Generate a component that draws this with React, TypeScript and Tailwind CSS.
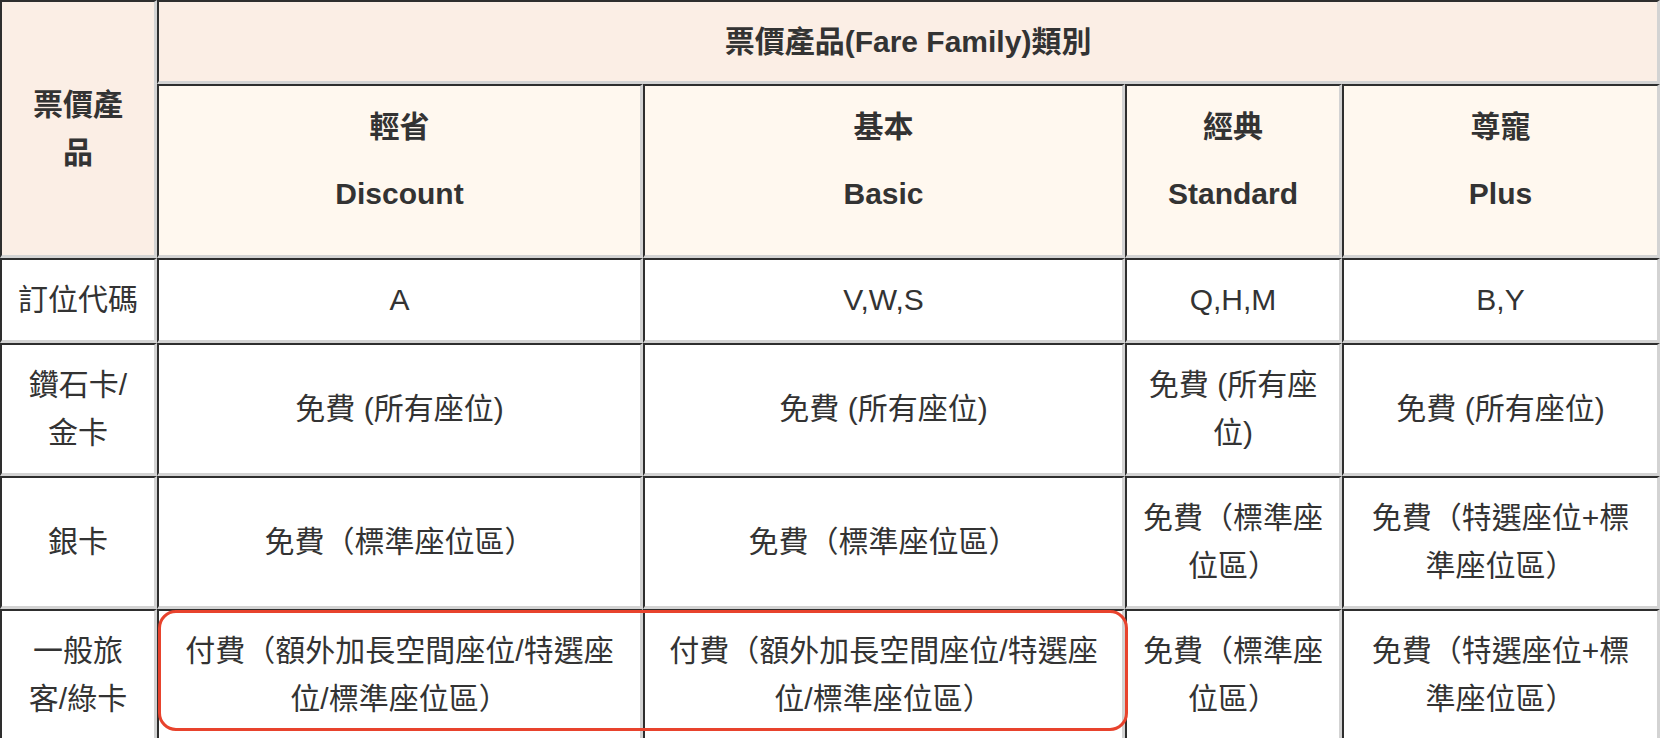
const cell =
  "border-t-2 border-l-2 border-r-[3px] border-b-[3px] border-t-[#2e2e2e] border-l-[#2e2e2e] border-r-[#d3d3d3] border-b-[#d3d3d3] text-center align-middle";

const td = `${cell} px-[14px] py-4 font-normal`;

const families = [
  { zh: "輕省", en: "Discount" },
  { zh: "基本", en: "Basic" },
  { zh: "經典", en: "Standard" },
  { zh: "尊寵", en: "Plus" },
];

const rows = [
  { label: "訂位代碼", cells: ["A", "V,W,S", "Q,H,M", "B,Y"] },
  {
    label: "鑽石卡/金卡",
    cells: ["免費 (所有座位)", "免費 (所有座位)", "免費 (所有座位)", "免費 (所有座位)"],
  },
  {
    label: "銀卡",
    cells: ["免費（標準座位區）", "免費（標準座位區）", "免費（標準座位區）", "免費（特選座位+標準座位區）"],
  },
  {
    label: "一般旅客/綠卡",
    cells: [
      "付費（額外加長空間座位/特選座位/標準座位區）",
      "付費（額外加長空間座位/特選座位/標準座位區）",
      "免費（標準座位區）",
      "免費（特選座位+標準座位區）",
    ],
  },
];

export default function App() {
  return (
    <div className="min-h-screen w-full bg-white">
      <div
        className="relative w-full text-[30px] leading-[48px] text-[#333333]"
        style={{ fontFamily: '"Liberation Sans", "Noto Sans CJK TC", sans-serif' }}
      >
        <table className="w-full table-fixed border-separate border-spacing-0">
          <colgroup>
            <col className="w-[157px]" />
            <col className="w-[486px]" />
            <col className="w-[482px]" />
            <col className="w-[217px]" />
            <col className="w-[318px]" />
          </colgroup>
          <thead>
            <tr>
              <th rowSpan={2} className={`${cell} bg-[#fbeee5] px-5 font-bold`}>
                票價產品
              </th>
              <th colSpan={4} className={`${cell} bg-[#fbeee5] px-4 py-4 leading-[47px] font-bold`}>
                票價產品(Fare Family)類別
              </th>
            </tr>
            <tr>
              {families.map((f) => (
                <th key={f.en} className={`${cell} bg-[#fff8ef] px-4 pt-[17px] pb-[37px] font-bold`}>
                  <div className="flex flex-col items-center gap-[19px]">
                    <span>{f.zh}</span>
                    <span>{f.en}</span>
                  </div>
                </th>
              ))}
            </tr>
          </thead>
          <tbody>
            {rows.map((r) => (
              <tr key={r.label}>
                <td className={td}>{r.label}</td>
                {r.cells.map((c, i) => (
                  <td key={i} className={td}>
                    {c}
                  </td>
                ))}
              </tr>
            ))}
          </tbody>
        </table>

        {/* highlight around the paid-seat cells */}
        <div className="pointer-events-none absolute left-[158px] top-[610px] h-[121px] w-[970px] rounded-[18px] border-[3.5px] border-[#e8432d]" />
      </div>
    </div>
  );
}
